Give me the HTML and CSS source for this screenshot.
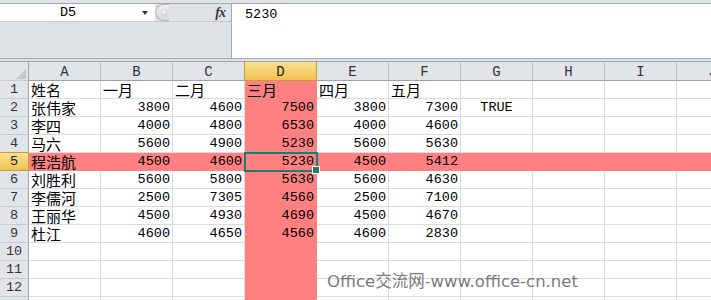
FILE: index.html
```html
<!DOCTYPE html>
<html lang="zh-CN">
<head>
  <meta charset="UTF-8" />
  <title>Sheet1 - Excel</title>
  <link rel="stylesheet" href="styles.css">
</head>
<body>
  <div class="formula-bar">
    <div class="name-area">
      <div class="name-row">
        <div class="name-box">
          <span class="name-text">D5</span>
          <span class="name-arrow"></span>
        </div>
        <span class="knob"><span class="knob-dot"></span></span>
        <span class="fx">fx</span>
      </div>
    </div>
    <div class="formula-input">5230</div>
  </div>

  <div class="sheet">
    <div class="row head">
      <div class="rh corner"><span class="corner-mark"></span></div>
      <div>A</div><div>B</div><div>C</div><div class="on">D</div><div>E</div>
      <div>F</div><div>G</div><div>H</div><div>I</div><div>J</div>
    </div>
    <div class="row">
      <div class="rh">1</div><div class="t">姓名</div><div class="t">一月</div><div class="t">二月</div><div class="t hl">三月</div>
      <div class="t">四月</div><div class="t">五月</div><div></div><div></div><div></div><div></div>
    </div>
    <div class="row">
      <div class="rh">2</div><div class="t">张伟家</div><div class="n">3800</div><div class="n">4600</div><div class="n hl">7500</div>
      <div class="n">3800</div><div class="n">7300</div><div class="b">TRUE</div><div></div><div></div><div></div>
    </div>
    <div class="row">
      <div class="rh">3</div><div class="t">李四</div><div class="n">4000</div><div class="n">4800</div><div class="n hl">6530</div>
      <div class="n">4000</div><div class="n">4600</div><div></div><div></div><div></div><div></div>
    </div>
    <div class="row">
      <div class="rh">4</div><div class="t">马六</div><div class="n">5600</div><div class="n">4900</div><div class="n hl">5230</div>
      <div class="n">5600</div><div class="n">5630</div><div></div><div></div><div></div><div></div>
    </div>
    <div class="row pick">
      <div class="rh">5</div><div class="t">程浩航</div><div class="n">4500</div><div class="n">4600</div><div class="n cur">5230</div>
      <div class="n">4500</div><div class="n">5412</div><div></div><div></div><div></div><div></div>
    </div>
    <div class="row">
      <div class="rh">6</div><div class="t">刘胜利</div><div class="n">5600</div><div class="n">5800</div><div class="n hl">5630</div>
      <div class="n">5600</div><div class="n">4630</div><div></div><div></div><div></div><div></div>
    </div>
    <div class="row">
      <div class="rh">7</div><div class="t">李儒河</div><div class="n">2500</div><div class="n">7305</div><div class="n hl">4560</div>
      <div class="n">2500</div><div class="n">7100</div><div></div><div></div><div></div><div></div>
    </div>
    <div class="row">
      <div class="rh">8</div><div class="t">王丽华</div><div class="n">4500</div><div class="n">4930</div><div class="n hl">4690</div>
      <div class="n">4500</div><div class="n">4670</div><div></div><div></div><div></div><div></div>
    </div>
    <div class="row">
      <div class="rh">9</div><div class="t">杜江</div><div class="n">4600</div><div class="n">4650</div><div class="n hl">4560</div>
      <div class="n">4600</div><div class="n">2830</div><div></div><div></div><div></div><div></div>
    </div>
    <div class="row">
      <div class="rh">10</div><div></div><div></div><div></div><div class="hl"></div>
      <div></div><div></div><div></div><div></div><div></div><div></div>
    </div>
    <div class="row">
      <div class="rh">11</div><div></div><div></div><div></div><div class="hl"></div>
      <div></div><div></div><div></div><div></div><div></div><div></div>
    </div>
    <div class="row">
      <div class="rh">12</div><div></div><div></div><div></div><div class="hl"></div>
      <div></div><div></div><div></div><div></div><div></div><div></div>
    </div>
    <div class="row">
      <div class="rh">13</div><div></div><div></div><div></div><div class="hl"></div>
      <div></div><div></div><div></div><div></div><div></div><div></div>
    </div>
  </div>

  <div class="watermark">Office交流网-www.office-cn.net</div>
</body>
</html>
```

FILE: styles.css
```css
* {
  margin: 0;
  padding: 0;
  box-sizing: border-box;
}

body {
  position: relative;
  width: 711px;
  height: 300px;
  overflow: hidden;
  background: #dfe3e8;
  font-family: "Liberation Mono", "Noto Sans CJK SC", monospace;
  font-size: 13.5px;
  color: #000;
}

/* Formula bar */
.formula-bar {
  display: flex;
  height: 59px;
  padding-top: 3px;
  border-bottom: 1px solid #a5a9ae;
  margin-bottom: 2px;
}

.name-area {
  width: 232px;
  border-top: 1px solid #a5a9ae;
  border-right: 1px solid #a5a9ae;
}

.name-row {
  display: flex;
  align-items: center;
  height: 18px;
  border-bottom: 1px solid #c4c8cd;
}

.name-box {
  display: flex;
  align-items: center;
  width: 155px;
  height: 100%;
  background: #fff;
}

.name-text {
  width: 136px;
  text-align: center;
  line-height: 17px;
}

.name-arrow {
  margin-left: 6px;
  width: 0;
  height: 0;
  border-left: 3.5px solid transparent;
  border-right: 3.5px solid transparent;
  border-top: 4px solid #333;
}

.knob {
  display: flex;
  align-items: center;
  justify-content: center;
  width: 14px;
  height: 17px;
  border: 1px solid #b4b8bd;
  border-right: none;
  border-radius: 9px 0 0 9px;
  background: linear-gradient(#eef0f3, #d5d9de);
}

.knob-dot {
  width: 7px;
  height: 7px;
  margin-left: 3px;
  border-radius: 50%;
  background: radial-gradient(circle at 40% 35%, #fafbfc, #c9cdd2);
  border: 1px solid #d2d5d9;
}

.fx {
  margin-left: auto;
  margin-right: 6px;
  font-family: "Liberation Serif", serif;
  font-style: italic;
  font-weight: bold;
  font-size: 14px;
  color: #3c3c3c;
  letter-spacing: -1px;
}

.formula-input {
  flex: 1;
  background: #fff;
  border-top: 1px solid #a5a9ae;
  padding: 3px 0 0 13px;
  line-height: 16px;
}

/* Grid */
.sheet {
  background: #fff;
}

.row {
  display: flex;
  height: 18px;
}

.row > div {
  flex: none;
  width: 72px;
  padding: 1px 2px 0;
  border-right: 1px solid #dadcdd;
  border-bottom: 1px solid #dadcdd;
  line-height: 16px;
  white-space: nowrap;
}

.row > .rh {
  width: 29px;
  padding: 1px 0 0;
  text-align: center;
  color: #333;
  background: #e1e5ea;
  border-right-color: #9ea3a8;
  border-bottom-color: #c6cacf;
}

.row > .t {
  font-family: "Noto Sans CJK SC", sans-serif;
  font-size: 15px;
  padding-top: 0;
  line-height: 17px;
}

.row > .n {
  text-align: right;
}

.row > .b {
  text-align: center;
}

.head {
  height: 20px;
}

.head > div {
  padding: 2px 0 0;
  text-align: center;
  color: #333;
  font-size: 14px;
  background: #e1e5ea;
  border-top: 1px solid #9ea3a8;
  border-right-color: #b8bcc1;
  border-bottom-color: #9ea3a8;
}

.head > .corner {
  display: flex;
  align-items: flex-end;
  justify-content: flex-end;
  padding: 0 2px 1px 0;
}

.corner-mark {
  width: 0;
  height: 0;
  border-left: 10px solid transparent;
  border-bottom: 10px solid #c3c7cc;
}

.head > .on,
.pick > .rh {
  background: linear-gradient(#f9e195, #f1c350);
  border-right-color: #c49a43;
  border-bottom-color: #c49a43;
  color: #222;
}

.head > .on {
  box-shadow: -1px 0 #c49a43;
}

.pick > .rh {
  box-shadow: 0 -1px #c49a43;
}

/* Highlighted column and row */
.row > .hl,
.pick > div {
  background: #ff8080;
  border-color: #ff8080;
}

.pick > .cur {
  position: relative;
  outline: 2px solid #1d7b74;
  outline-offset: -1px;
  z-index: 1;
}

.pick > .cur::after {
  content: "";
  position: absolute;
  right: -4px;
  bottom: -4px;
  width: 6px;
  height: 6px;
  background: #1d7b74;
  border: 1px solid #fff;
}

.watermark {
  position: absolute;
  left: 327px;
  top: 268px;
  font-family: "DejaVu Sans", "Noto Sans CJK SC", sans-serif;
  font-size: 16.5px;
  color: rgba(85, 85, 85, 0.8);
  white-space: nowrap;
}
```
